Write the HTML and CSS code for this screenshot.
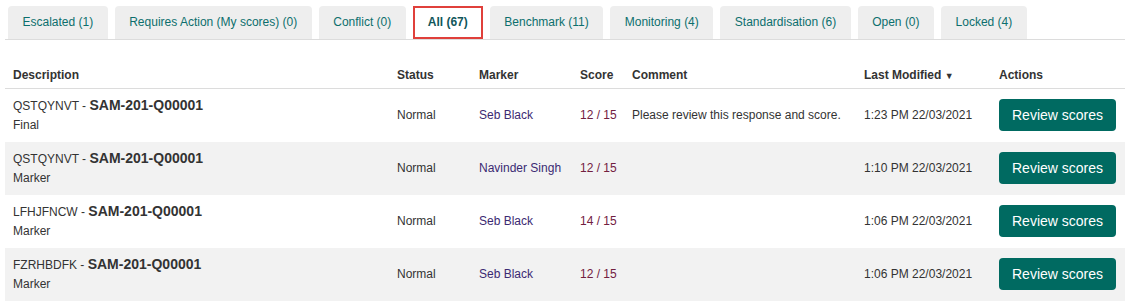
FILE: index.html
```html
<!DOCTYPE html>
<html lang="en">
<head>
    <meta charset="UTF-8">
    <title>Review queue</title>
    <link rel="stylesheet" href="styles.css">
</head>
<body>
    <div class="tabs">
        <button class="tabs__tab">Escalated (1)</button>
        <button class="tabs__tab">Requires Action (My scores) (0)</button>
        <button class="tabs__tab">Conflict (0)</button>
        <button class="tabs__tab tabs__tab--active">All (67)</button>
        <button class="tabs__tab">Benchmark (11)</button>
        <button class="tabs__tab">Monitoring (4)</button>
        <button class="tabs__tab">Standardisation (6)</button>
        <button class="tabs__tab">Open (0)</button>
        <button class="tabs__tab">Locked (4)</button>
    </div>

    <table class="grid">
        <colgroup>
            <col style="width: 384px">
            <col style="width: 82px">
            <col style="width: 101px">
            <col style="width: 52px">
            <col style="width: 232px">
            <col style="width: 135px">
            <col>
        </colgroup>
        <thead>
            <tr>
                <th>Description</th>
                <th>Status</th>
                <th>Marker</th>
                <th>Score</th>
                <th>Comment</th>
                <th>Last Modified <span class="grid__sort">&#9660;</span></th>
                <th>Actions</th>
            </tr>
        </thead>
        <tbody>
            <tr>
                <td>
                    <div class="grid__title">QSTQYNVT - <b>SAM-201-Q00001</b></div>
                    <div class="grid__sub">Final</div>
                </td>
                <td>Normal</td>
                <td class="grid__marker">Seb Black</td>
                <td class="grid__score">12 / 15</td>
                <td>Please review this response and score.</td>
                <td>1:23 PM 22/03/2021</td>
                <td><button class="grid__button">Review scores</button></td>
            </tr>
            <tr>
                <td>
                    <div class="grid__title">QSTQYNVT - <b>SAM-201-Q00001</b></div>
                    <div class="grid__sub">Marker</div>
                </td>
                <td>Normal</td>
                <td class="grid__marker">Navinder Singh</td>
                <td class="grid__score">12 / 15</td>
                <td></td>
                <td>1:10 PM 22/03/2021</td>
                <td><button class="grid__button">Review scores</button></td>
            </tr>
            <tr>
                <td>
                    <div class="grid__title">LFHJFNCW - <b>SAM-201-Q00001</b></div>
                    <div class="grid__sub">Marker</div>
                </td>
                <td>Normal</td>
                <td class="grid__marker">Seb Black</td>
                <td class="grid__score">14 / 15</td>
                <td></td>
                <td>1:06 PM 22/03/2021</td>
                <td><button class="grid__button">Review scores</button></td>
            </tr>
            <tr>
                <td>
                    <div class="grid__title">FZRHBDFK - <b>SAM-201-Q00001</b></div>
                    <div class="grid__sub">Marker</div>
                </td>
                <td>Normal</td>
                <td class="grid__marker">Seb Black</td>
                <td class="grid__score">12 / 15</td>
                <td></td>
                <td>1:06 PM 22/03/2021</td>
                <td><button class="grid__button">Review scores</button></td>
            </tr>
        </tbody>
    </table>
</body>
</html>
```

FILE: styles.css
```css
body {
    margin: 0 5px;
    padding-top: 6px;
    font-family: "Liberation Sans", Arial, sans-serif;
    font-size: 12px;
    color: #333;
    background: #fff;
}
.tabs {
    display: flex;
    gap: 7px;
    padding-left: 3px;
    border-bottom: 1px solid #dcdcdc;
}
.tabs__tab {
    font-family: inherit;
    font-size: 12px;
    line-height: 15px;
    color: #0c6f6d;
    background-color: #eeeeee;
    border: none;
    border-radius: 4px 4px 0 0;
    padding: 9px 14.5px;
    height: 33px;
    cursor: pointer;
}
.tabs__tab--active {
    background-color: #fff;
    border: 2px solid #e0403b;
    border-radius: 0;
    padding: 7px 13px;
    font-weight: bold;
    color: #10565a;
}
.grid {
    width: 100%;
    margin-top: 21px;
    border-collapse: collapse;
    table-layout: fixed;
}
.grid th {
    text-align: left;
    font-weight: bold;
    font-size: 12px;
    color: #333;
    height: 27px;
    padding: 0 8px;
    border-bottom: 1px solid #dcdcdc;
    white-space: nowrap;
}
.grid__sort {
    font-size: 9px;
}
.grid td {
    height: 53px;
    padding: 0 8px;
    vertical-align: middle;
    box-sizing: border-box;
    white-space: nowrap;
}
.grid tbody tr:nth-child(even) {
    background-color: #f2f2f2;
}
.grid__title {
    line-height: 18px;
}
.grid__title b {
    font-size: 14px;
}
.grid__sub {
    line-height: 20px;
}
.grid__marker {
    color: #3b2a72;
}
.grid__score {
    color: #72203f;
}
.grid__button {
    font-family: inherit;
    font-size: 14px;
    color: #fff;
    background-color: #006a61;
    border: none;
    border-radius: 4px;
    height: 32px;
    padding: 0 13px;
    cursor: pointer;
}
```
